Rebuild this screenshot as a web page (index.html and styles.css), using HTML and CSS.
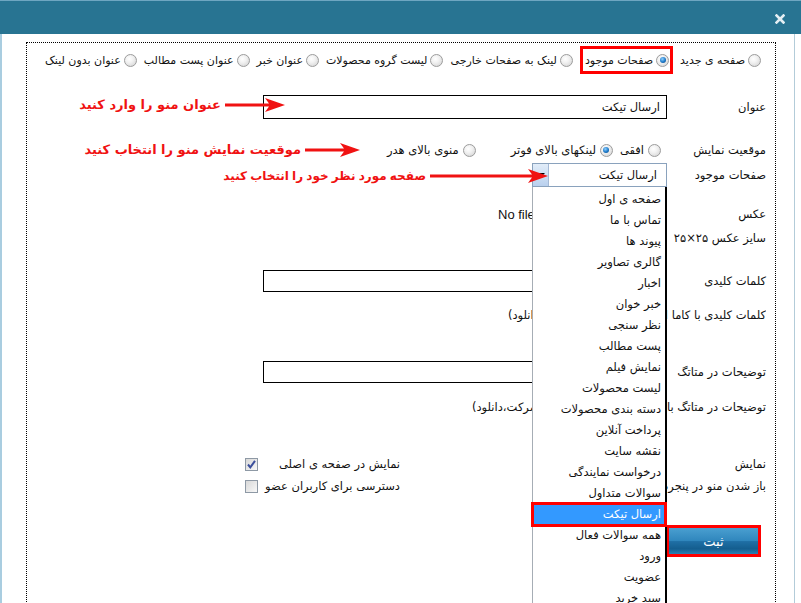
FILE: index.html
```html
<!DOCTYPE html>
<html lang="fa" dir="rtl">
<head>
    <meta charset="UTF-8">
    <meta name="viewport" content="width=device-width, initial-scale=1.0">
    <title>ویرایش منو</title>
    <link rel="stylesheet" href="styles.css">
</head>
<body>

<div class="dialog">
    <div class="titlebar">
        <span class="close">
            <svg width="10" height="10" viewBox="0 0 10 10"><path d="M1.5 1.5L8.5 8.5M8.5 1.5L1.5 8.5" stroke="#e4eef3" stroke-width="2.6" stroke-linecap="square"/></svg>
        </span>
    </div>

    <div class="dialog-body">
        <div class="box">
            <div class="link-types">
                <label class="opt"><span class="radio"></span>صفحه ی جدید</label>
                <label class="opt marked"><span class="radio on"></span>صفحات موجود</label>
                <label class="opt"><span class="radio"></span>لینک به صفحات خارجی</label>
                <label class="opt"><span class="radio"></span>لیست گروه محصولات</label>
                <label class="opt"><span class="radio"></span>عنوان خبر</label>
                <label class="opt"><span class="radio"></span>عنوان پست مطالب</label>
                <label class="opt"><span class="radio"></span>عنوان بدون لینک</label>
            </div>

            <div class="row row-title">
                <div class="label">عنوان</div>
                <div class="value"><div class="textbox">ارسال تیکت</div></div>
            </div>

            <div class="row row-position">
                <div class="label">موقعیت نمایش</div>
                <div class="value positions">
                    <label class="opt"><span class="radio"></span>افقی</label>
                    <label class="opt footer-opt"><span class="radio on"></span>لینکهای بالای فوتر</label>
                    <label class="opt"><span class="radio"></span>منوی بالای هدر</label>
                </div>
            </div>

            <div class="row row-select">
                <div class="label">صفحات موجود</div>
                <div class="value">
                    <div class="select">
                        <span class="select-text">ارسال تیکت</span>
                        <span class="select-arrow"></span>
                    </div>
                </div>
            </div>

            <div class="row row-image">
                <div class="label">عکس</div>
                <div class="value tail-value">
                    <span class="tail file-name"><span>No file chosen</span></span>
                </div>
            </div>

            <div class="row row-size">
                <div class="label">سایز عکس ۲۵×۲۵</div>
                <div class="value"></div>
            </div>

            <div class="row row-keywords">
                <div class="label">کلمات کلیدی</div>
                <div class="value"><div class="textbox"></div></div>
            </div>

            <div class="row row-hint">
                <div class="label"><span class="long">کلمات کلیدی با کاما از هم جدا شوند</span></div>
                <div class="value tail-value"><span class="tail hint-kw"><span>(مثال: خرید،فروش،دانلود)</span></span></div>
            </div>

            <div class="row row-desc">
                <div class="label">توضیحات در متاتگ</div>
                <div class="value"><div class="textbox"></div></div>
            </div>

            <div class="row row-hint2">
                <div class="label"><span class="long">توضیحات در متاتگ با کاما جدا شوند</span></div>
                <div class="value tail-value"><span class="tail hint-desc"><span>(مثال: خرید،فروش،شرکت،دانلود)</span></span></div>
            </div>

            <div class="row row-show">
                <div class="label">نمایش</div>
                <div class="value checks">
                    <span class="check-text">نمایش در صفحه ی اصلی</span>
                    <span class="checkbox">
                        <svg width="11" height="11" viewBox="0 0 11 11"><path d="M2 5.5L4.3 8.3L9 1.8" fill="none" stroke="#3b4f9c" stroke-width="2"/></svg>
                    </span>
                </div>
            </div>

            <div class="row row-open">
                <div class="label"><span class="long">باز شدن منو در پنجره جدید</span></div>
                <div class="value checks">
                    <span class="check-text">دسترسی برای کاربران عضو</span>
                    <span class="checkbox"></span>
                </div>
            </div>

            <div class="row row-submit">
                <div class="label"><button class="submit">ثبت</button></div>
            </div>
        </div>
    </div>

    <!-- راهنمای قرمز کنار فیلدها -->
    <div class="note note-title">
        <span class="note-text">عنوان منو را وارد کنید</span>
        <svg class="arrow" width="60" height="14" viewBox="0 0 60 14"><polygon points="0,5.5 44,5.5 40,0 60,7 40,14 44,8.5 0,8.5" fill="#f01212"/></svg>
    </div>
    <div class="note note-position">
        <span class="note-text">موقعیت نمایش منو را انتخاب کنید</span>
        <svg class="arrow" width="55" height="14" viewBox="0 0 55 14"><polygon points="0,5.5 39,5.5 35,0 55,7 35,14 39,8.5 0,8.5" fill="#f01212"/></svg>
    </div>
    <div class="note note-page">
        <span class="note-text">صفحه مورد نظر خود را انتخاب کنید</span>
        <svg class="arrow" width="118" height="14" viewBox="0 0 118 14"><polygon points="0,5.5 102,5.5 98,0 118,7 98,14 102,8.5 0,8.5" fill="#f01212"/></svg>
    </div>

    <!-- لیست باز شده صفحات -->
    <ul class="dropdown">
        <li>صفحه ی اول</li>
        <li>تماس با ما</li>
        <li>پیوند ها</li>
        <li>گالری تصاویر</li>
        <li>اخبار</li>
        <li>خبر خوان</li>
        <li>نظر سنجی</li>
        <li>پست مطالب</li>
        <li>نمایش فیلم</li>
        <li>لیست محصولات</li>
        <li>دسته بندی محصولات</li>
        <li>پرداخت آنلاین</li>
        <li>نقشه سایت</li>
        <li>درخواست نمایندگی</li>
        <li>سوالات متداول</li>
        <li class="active">ارسال تیکت</li>
        <li>همه سوالات فعال</li>
        <li>ورود</li>
        <li>عضویت</li>
        <li>سبد خرید</li>
    </ul>
</div>

</body>
</html>
```

FILE: styles.css
```css
* {
    box-sizing: border-box;
}

body {
    margin: 0;
    background: #fff;
    font-family: "DejaVu Sans", sans-serif;
    font-size: 11.5px;
    color: #111;
}

.dialog {
    position: relative;
    width: 801px;
    height: 603px;
    overflow: hidden;
    background: #fff;
}

.titlebar {
    height: 34px;
    background: #287492;
    border-top: 1px solid #6ea6c1;
    display: flex;
    align-items: center;
    padding-right: 16px;
}

.close {
    display: flex;
    margin-top: 2px;
}

.dialog-body {
    height: 569px;
    margin-right: 6px;
    border-left: 2px solid #a9cde0;
    border-right: 1px solid #b3ccd9;
    padding: 8px 18px 0 24px;
}

.box {
    height: 620px;
    border: 1px dotted #000;
    padding: 5px 9px 0 10px;
}

/* radio & checkbox look */
.opt {
    display: flex;
    align-items: center;
    gap: 4px;
    white-space: nowrap;
}

.radio {
    width: 13px;
    height: 13px;
    flex: none;
    border-radius: 50%;
    border: 1px solid #9c9c9c;
    background: radial-gradient(circle at 40% 35%, #fff 0%, #f1f1f1 40%, #cfcfcf 100%);
    display: flex;
    align-items: center;
    justify-content: center;
}

.radio.on::after {
    content: "";
    width: 6px;
    height: 6px;
    border-radius: 50%;
    background: radial-gradient(circle at 40% 35%, #8fd0ff 0%, #1b78c8 55%, #0b3f78 100%);
}

.checkbox {
    width: 13px;
    height: 13px;
    flex: none;
    border: 1px solid #8e99a5;
    background: linear-gradient(135deg, #d8d8d8, #f8f8f8);
    display: flex;
    align-items: center;
    justify-content: center;
}

.link-types {
    display: flex;
    align-items: center;
    gap: 7px;
    height: 24px;
    padding-right: 5px;
    font-size: 11px;
}

.link-types .opt {
    gap: 3px;
}

.marked {
    border: 3px solid #f00;
    height: 28px;
    padding: 0 1px 0 2px;
}

/* form rows */
.row {
    display: flex;
    align-items: center;
    height: 22px;
}

.label {
    width: 99px;
    flex: none;
    white-space: nowrap;
}

.label .long {
    display: inline-block;
    max-width: 100px;
    overflow: hidden;
    vertical-align: top;
}

.value {
    width: 404px;
    height: 100%;
    display: flex;
    align-items: center;
}

.row-title { margin-top: 23px; height: 24px; }
.row-position { margin-top: 20px; }
.row-select { margin-top: 2px; height: 24px; }
.row-image { margin-top: 16px; }
.row-size { margin-top: 2px; }
.row-keywords { margin-top: 21px; }
.row-hint { margin-top: 12px; }
.row-desc { margin-top: 35px; }
.row-hint2 { margin-top: 13px; }
.row-show { margin-top: 35px; }
.row-open { margin-top: 0; }
.row-submit { margin-top: 31px; height: 26px; }

.textbox {
    width: 404px;
    height: 22px;
    border: 1px solid #000;
    padding: 0 6px;
    line-height: 20px;
}

.row-title .textbox {
    height: 24px;
    line-height: 22px;
}

.positions {
    gap: 7px;
    padding-right: 6px;
}

.footer-opt {
    margin-left: 28px;
}

.select {
    width: 135px;
    height: 24px;
    border: 1px solid #8aa2bd;
    display: flex;
    align-items: center;
}

.select-text {
    flex: 1;
    padding-right: 9px;
}

.select-arrow {
    width: 16px;
    height: 100%;
    background: linear-gradient(#e2edf9, #b9d0ee);
    border-right: 1px solid #a4b9d6;
    display: flex;
    align-items: center;
    justify-content: center;
}

.select-arrow::after {
    content: "";
    border-left: 4px solid transparent;
    border-right: 4px solid transparent;
    border-top: 4px solid #000;
}

/* texts whose rest runs under the open list: only the left end shows */
.tail-value {
    justify-content: flex-end;
}

.tail {
    direction: ltr;
    overflow: hidden;
    white-space: nowrap;
}

.tail span {
    direction: rtl;
    unicode-bidi: isolate;
}

.file-name {
    width: 34px;
    margin-left: 235px;
    font-family: "Liberation Sans", sans-serif;
    font-size: 13px;
}

.file-name span {
    direction: ltr;
}

.hint-kw { width: 25px; margin-left: 245px; }
.hint-desc { width: 61px; margin-left: 209px; }

.checks {
    padding-right: 267px;
}

.check-text {
    width: 142px;
    flex: none;
    white-space: nowrap;
}

.submit {
    width: 89px;
    height: 26px;
    margin-right: 8px;
    border: none;
    outline: 3px solid #f00;
    color: #fff;
    font-family: "DejaVu Sans", sans-serif;
    font-size: 13px;
    background: linear-gradient(#4a9fd0 0%, #2f86bd 50%, #1f6fa5 52%, #145e8f 80%, #2a7fb3 100%);
}

/* red help notes, anchored at the arrow tip */
.note {
    position: absolute;
    direction: ltr;
    display: flex;
    align-items: center;
    gap: 4px;
    color: #f01212;
    font-weight: bold;
    font-size: 13px;
}

.note-text {
    direction: rtl;
    white-space: nowrap;
}

.note-title { right: 516px; top: 97px; }
.note-position { right: 441px; top: 142px; }
.note-page { right: 253px; top: 169px; font-size: 12px; word-spacing: -1px; }

/* opened select list */
.dropdown {
    position: absolute;
    left: 532px;
    top: 187px;
    width: 135px;
    height: 430px;
    margin: 0;
    padding: 2px 0 0;
    list-style: none;
    background: #fff;
    border-left: 1px solid #a6adb5;
    border-right: 2px solid #000;
}

.dropdown li {
    height: 21px;
    line-height: 21px;
    padding-right: 4px;
    white-space: nowrap;
}

.dropdown li.active {
    background: #3399ff;
    color: #fff;
    outline: 3px solid #f00;
    outline-offset: -1px;
}
```
